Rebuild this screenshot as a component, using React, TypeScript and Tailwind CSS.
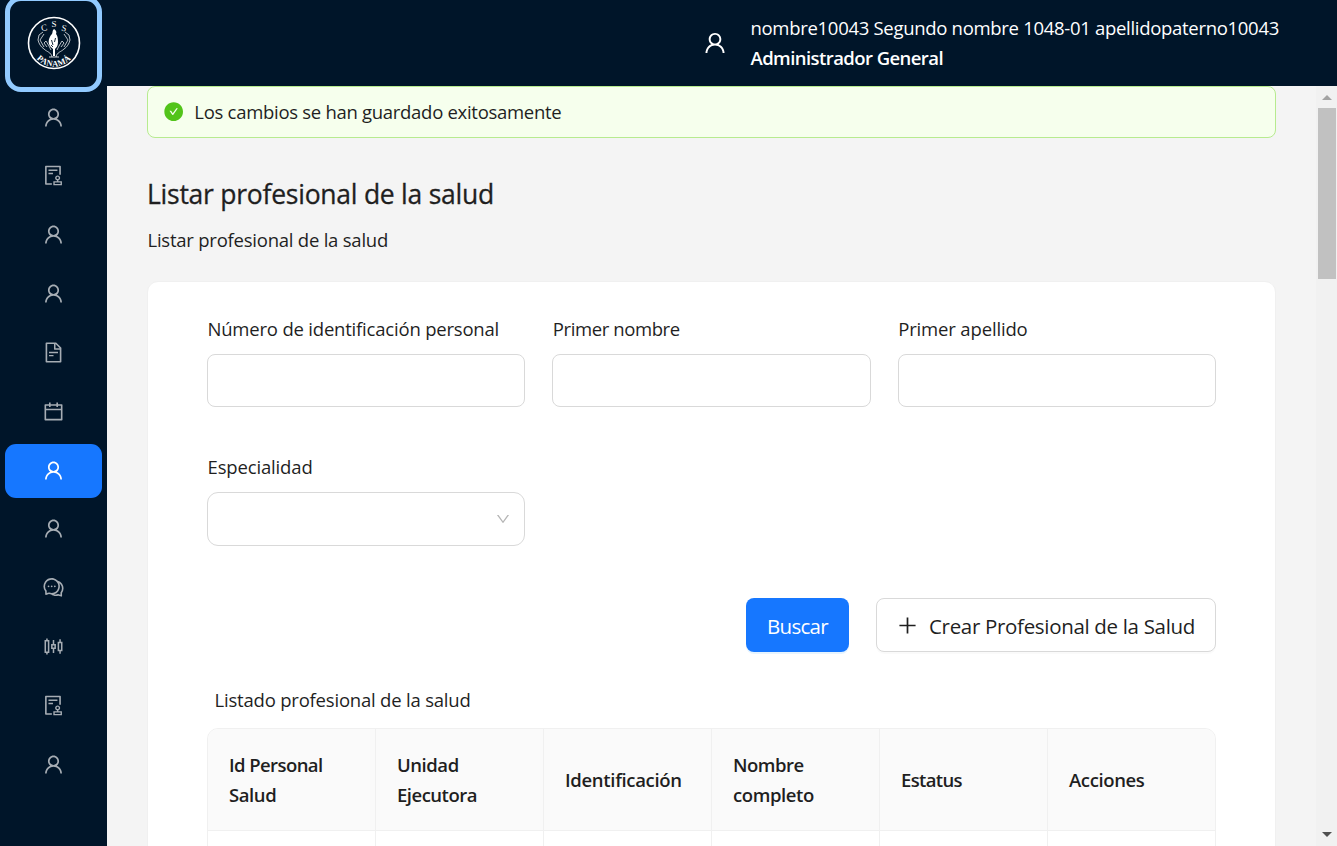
import React from "react";
import {
  AiOutlineUser,
  AiOutlineAudit,
  AiOutlineFileText,
  AiOutlineCalendar,
  AiOutlineComment,
  AiOutlineSliders,
  AiOutlinePlus,
  AiOutlineDown,
  AiFillCheckCircle,
} from "react-icons/ai";

const menu = [
  AiOutlineUser,
  AiOutlineAudit,
  AiOutlineUser,
  AiOutlineUser,
  AiOutlineFileText,
  AiOutlineCalendar,
  AiOutlineUser,
  AiOutlineUser,
  AiOutlineComment,
  AiOutlineSliders,
  AiOutlineAudit,
  AiOutlineUser,
];
const ACTIVE = 6;

function Logo() {
  return (
    <svg width="54" height="54" viewBox="0 0 54 54" fill="none" stroke="#fff">
      <circle cx="27" cy="27" r="25.5" strokeWidth="1.6" />
      <defs>
        <path id="arc-bottom" d="M4.500 29a22.500 21.500 0 0 0 45 0" />
      </defs>
      <g fill="#fff" stroke="none" fontFamily="Liberation Serif, serif">
        <text x="14" y="15" fontSize="9" transform="rotate(-12 16 12)">C</text>
        <text x="24.5" y="11" fontSize="9">S</text>
        <text x="34.5" y="15" fontSize="9" transform="rotate(12 37 12)">S</text>
        <text fontSize="8.500" fontWeight="bold" letterSpacing="0.300">
          <textPath href="#arc-bottom" startOffset="50%" textAnchor="middle">PANAMÁ</textPath>
        </text>
      </g>
      <path d="M27 13c-2 2-1 3-2 5-2 2-4 6-3 10 1 3 3 4 4 5v7h2v-7c1-1 3-3 3-7 0-5-1-7-2-8 1-2 0-4-2-5z" fill="#fff" stroke="none" />
      <path d="M24.500 24l1.500 5M28.500 22l-1 4M24 29l2 2" stroke="#001529" strokeWidth="0.900" />
      <path d="M25 41c-1-5-5-5-8-8-3-2-5-5-6-9l1-5 4-3M17 18l-4 6 4 7M20 31l-3-4 2-2 3 5 2 4" strokeWidth="0.900" strokeOpacity="0.800" />
      <path d="M29 41c1-5 5-5 8-8 3-2 5-5 6-9l-1-5-4-3M37 18l4 6-4 7M34 31l3-4-2-2-3 5-2 4" strokeWidth="0.900" strokeOpacity="0.800" />
      <path d="M22 41h10" strokeWidth="0.800" />
    </svg>
  );
}

function Field({ label, tracking, select }: { label: string; tracking: string; select?: boolean }) {
  return (
    <div className="flex flex-col">
      <div className={`h-[30px] whitespace-nowrap pl-[0.500px] text-[18.500px] leading-[30px] ${tracking}`}>{label}</div>
      {select ? (
        <div className="mt-[10px] flex h-[54px] items-center justify-end rounded-[11px] border border-[#d9d9d9] bg-white pr-[13px]">
          <AiOutlineDown className="size-4 text-[#b5b5b5]" />
        </div>
      ) : (
        <input aria-label={label} className="mt-[10px] block h-[53px] w-full rounded-lg border border-[#d9d9d9] bg-white outline-none" />
      )}
    </div>
  );
}

const columns: { text: string; tracking: string }[][] = [
  [
    { text: "Id Personal", tracking: "tracking-[-0.580px]" },
    { text: "Salud", tracking: "tracking-[-0.400px]" },
  ],
  [
    { text: "Unidad", tracking: "tracking-[-0.450px]" },
    { text: "Ejecutora", tracking: "tracking-[-0.500px]" },
  ],
  [{ text: "Identificación", tracking: "tracking-[-0.320px]" }],
  [
    { text: "Nombre", tracking: "tracking-[-0.480px]" },
    { text: "completo", tracking: "tracking-[-0.400px]" },
  ],
  [{ text: "Estatus", tracking: "tracking-[-0.650px]" }],
  [{ text: "Acciones", tracking: "tracking-[-0.380px]" }],
];

export default function App() {
  return (
    <div className="flex h-[846px] w-[1337px] overflow-hidden bg-[#f4f4f4] font-['Open_Sans','Noto_Sans',sans-serif] text-[#1f1f1f]">
      <aside className="flex w-[107px] shrink-0 flex-col items-center bg-[#001529]">
        <div className="-mt-[4px] flex h-[96px] w-[97px] shrink-0 items-center justify-center rounded-[16px] border-[5px] border-[#91caff] pb-[3px]">
          <Logo />
        </div>
        <nav className="-mt-[1px] flex flex-col gap-[5.250px]">
          {menu.map((Icon, i) => (
            <button
              key={i}
              className={
                i === ACTIVE
                  ? "flex h-[53.600px] w-[97px] items-center justify-center rounded-[11px] bg-[#1677ff] pb-[1.500px] text-white"
                  : "flex h-[53.600px] w-[97px] items-center justify-center rounded-[11px] pb-[1.500px] text-[#a6adb4]"
              }
            >
              <Icon className="size-[23px]" />
            </button>
          ))}
        </nav>
      </aside>

      <div className="flex min-w-0 flex-1 flex-col">
        <header className="flex h-[86px] shrink-0 items-center bg-[#001529] pl-[595px] text-white">
          <AiOutlineUser className="size-[26px] shrink-0" />
          <div className="-mt-[1px] ml-[22.500px] whitespace-nowrap text-[18.500px] leading-[30px]">
            <div className="tracking-[-0.300px]">nombre10043 Segundo nombre 1048-01 apellidopaterno10043</div>
            <div className="font-semibold tracking-[-0.570px]">Administrador General</div>
          </div>
        </header>

        <div className="flex min-h-0 flex-1">
          <main className="flex min-w-0 flex-1 flex-col overflow-hidden pl-10 pr-[40px]">
            <div className="flex h-[52px] shrink-0 items-center rounded-lg border border-[#b7eb8f] bg-[#f6ffed] pl-[14.500px]">
              <AiFillCheckCircle className="size-[21.333px] text-[#52c41a]" />
              <span className="ml-[10.500px] whitespace-nowrap text-[18.500px] tracking-[-0.290px]">
                Los cambios se han guardado exitosamente
              </span>
            </div>

            <h1 className="mt-[36px] h-[40px] whitespace-nowrap text-[26.500px] font-medium leading-[40px] tracking-[-0.250px] [-webkit-text-stroke:0.300px_currentColor]">
              Listar profesional de la salud
            </h1>
            <p className="mt-[11px] h-[30px] whitespace-nowrap pl-[0.500px] text-[18.500px] leading-[30px] tracking-[-0.230px]">
              Listar profesional de la salud
            </p>

            <section className="mt-[26px] flex h-[640px] shrink-0 flex-col rounded-t-[11px] border border-[#f0f0f0] bg-white px-[59px] pt-[32px]">
              <div className="grid grid-cols-3 gap-x-[27px] gap-y-[45px]">
                <Field label="Número de identificación personal" tracking="tracking-[-0.200px]" />
                <Field label="Primer nombre" tracking="tracking-[-0.400px]" />
                <Field label="Primer apellido" tracking="tracking-[-0.150px]" />
                <Field label="Especialidad" tracking="tracking-[-0.150px]" select />
              </div>

              <div className="mt-[52px] flex justify-end gap-[27px] text-[20.500px]">
                <button className="flex h-[54px] w-[103px] items-center justify-center rounded-lg bg-[#1677ff] pt-[2px] tracking-[-0.700px] text-white shadow-[0_2px_0_rgba(5,145,255,0.1)]">
                  Buscar
                </button>
                <button className="flex h-[54px] w-[340px] items-center whitespace-nowrap rounded-lg border border-[#d9d9d9] bg-white pl-[19px] shadow-[0_2px_0_rgba(0,0,0,0.02)]">
                  <AiOutlinePlus className="size-[23px]" />
                  <span className="ml-[10px] pt-[2px] tracking-[-0.320px]">Crear Profesional de la Salud</span>
                </button>
              </div>

              <p className="mt-[33px] h-[30px] pl-[7.500px] text-[18.500px] leading-[30px] tracking-[-0.200px]">
                Listado profesional de la salud
              </p>

              <div className="mt-[13px] h-[130px] overflow-hidden rounded-t-[11px] border border-[#f0f0f0]">
                <div className="grid h-[102px] grid-cols-[168px_168px_168px_168px_168px_1fr] border-b border-[#f0f0f0] bg-[#fafafa]">
                  {columns.map((lines, i) => (
                    <div
                      key={i}
                      className="flex flex-col items-start justify-center border-r border-[#f0f0f0] pl-[21px] text-[18.500px] font-semibold leading-[30px] last:border-r-0"
                    >
                      {lines.map((l) => (
                        <span key={l.text} className={l.tracking}>
                          {l.text}
                        </span>
                      ))}
                    </div>
                  ))}
                </div>
                <div className="grid h-[30px] grid-cols-[168px_168px_168px_168px_168px_1fr]">
                  {columns.map((_, i) => (
                    <div key={i} className="border-r border-[#f0f0f0] last:border-r-0" />
                  ))}
                </div>
              </div>
            </section>
          </main>

          <div className="flex w-[21px] shrink-0 flex-col items-center bg-[#f1f1f1] pl-[1px]">
            <svg width="10" height="6" viewBox="0 0 10 6" className="mt-[9px] shrink-0">
              <path d="M5 0l5 5H0z" fill="#a3a3a3" />
            </svg>
            <div className="mt-[7px] h-[171px] w-[18px] bg-[#c1c1c1]" />
            <div className="flex-1" />
            <svg width="10" height="6" viewBox="0 0 10 6" className="mb-[8px] shrink-0">
              <path d="M0 0h10L5 5z" fill="#505050" />
            </svg>
          </div>
        </div>
      </div>
    </div>
  );
}
